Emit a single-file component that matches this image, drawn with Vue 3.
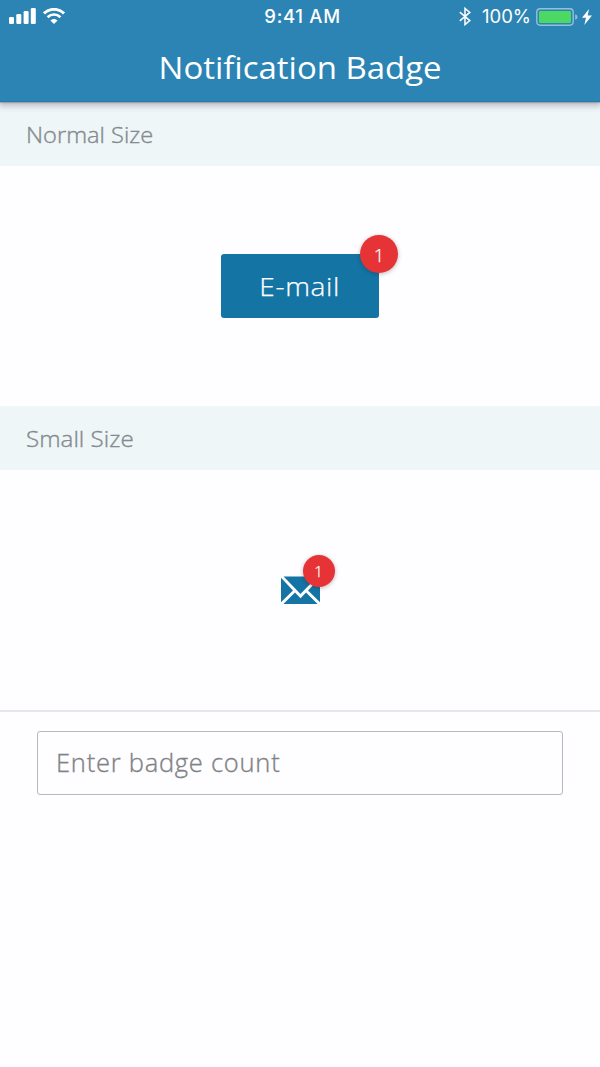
<script setup>
import { ref } from 'vue'

const count = ref(1)
const entry = ref('')
</script>

<template>
  <div class="screen">
    <header class="top">
      <div class="status">
        <div class="left">
          <svg class="signal" width="27" height="16" viewBox="0 0 27 16" fill="#fff">
            <rect x="0" y="9" width="5" height="7" rx="1.3" />
            <rect x="7.3" y="6" width="5" height="10" rx="1.3" />
            <rect x="14.6" y="3" width="5" height="13" rx="1.3" />
            <rect x="21.8" y="0" width="5" height="16" rx="1.3" />
          </svg>
          <svg class="wifi" width="22" height="16" viewBox="0 0 22 16">
            <path d="M1 5.4C6.6 -.1 15.4 -.1 21 5.4" fill="none" stroke="#fff" stroke-width="2.9" />
            <path d="M4.6 9.2C8.2 5.6 13.8 5.6 17.4 9.2" fill="none" stroke="#fff" stroke-width="2.7" />
            <path d="M7.4 12.5C9.4 10.4 12.6 10.4 14.6 12.5L11 16Z" fill="#fff" />
          </svg>
        </div>
        <span class="time">9:41 AM</span>
        <div class="right">
          <svg class="bluetooth" width="12" height="19" viewBox="0 0 12 19" fill="none" stroke="#fff" stroke-width="1.5">
            <path d="M.8 5.1L10.8 13.6L6 17.6V1.4L10.8 5.4L.8 13.9" />
          </svg>
          <span class="percent">100%</span>
          <svg class="battery" width="42" height="18" viewBox="0 0 42 18">
            <rect x=".8" y=".8" width="36.4" height="16.4" rx="3.4" fill="none" stroke="#93c0dc" stroke-width="1.4" />
            <rect x="3" y="3" width="32" height="12" rx="1" fill="#4bd863" />
            <path d="M39.2 6.2C42.2 7 42.2 11 39.2 11.8Z" fill="#93c0dc" />
          </svg>
          <svg class="bolt" width="10" height="16" viewBox="0 0 10 16">
            <path d="M7 0L0 8.8H4L2.3 16L10 6.6H5.7Z" fill="#fff" />
          </svg>
        </div>
      </div>
      <h1 class="title"><span>Notification Badge</span></h1>
    </header>

    <h2 class="section"><span class="normal">Normal Size</span></h2>
    <div class="stage">
      <div class="anchor">
        <button class="button"><span>E-mail</span></button>
        <span class="badge">{{ count }}</span>
      </div>
    </div>

    <h2 class="section"><span>Small Size</span></h2>
    <div class="stage small">
      <div class="anchor mail">
        <svg width="39" height="28" viewBox="0 0 39 28" fill="#1474a4">
          <path d="M2.6 .6H36.4L19.5 18Z" />
          <path d="M0 1.8L12 14.4L0 26.2Z" />
          <path d="M39 1.8L27 14.4L39 26.2Z" />
          <path d="M14 16.5L19.5 22.3L25 16.5L36.6 28H2.4Z" />
        </svg>
        <span class="badge tiny">{{ count }}</span>
      </div>
    </div>

    <div class="form">
      <input v-model="entry" class="field" placeholder="Enter badge count" />
    </div>
  </div>
</template>

<style>
body {
  background: #fefdff;
}
</style>

<style scoped>
.screen {
  height: 1067px;
  overflow: hidden;
  background: #fefdff;
  font-family: "Open Sans", "Noto Sans", sans-serif;
  font-weight: 400;
}
.top {
  position: relative;
  height: 102px;
  box-sizing: border-box;
  background: #2c84b4;
  border-bottom: 1px solid #2479a8;
  box-shadow: 0 1px 1px rgba(70, 80, 95, .3), 0 3px 6px 1px rgba(65, 60, 85, .3);
  color: #fff;
}
.status {
  display: grid;
  grid-template-columns: 1fr auto 1fr;
  height: 32px;
  font-family: Inter, sans-serif;
  font-size: 18.5px;
  line-height: 33px;
}
.left {
  display: flex;
  padding: 8px 0 0 9px;
  gap: 7px;
}
.time {
  padding-left: 5px;
  font-weight: 500;
  letter-spacing: .7px;
}
.right {
  display: flex;
  justify-content: flex-end;
  align-items: center;
  padding-right: 8px;
}
.percent {
  margin: 0 5px 0 11px;
  font-size: 18.5px;
}
.bolt {
  margin-left: 4px;
}
.title {
  margin: 0;
  font-size: 31px;
  font-weight: 400;
  line-height: 70px;
  text-align: center;
}
.title span {
  display: inline-block;
  transform: scaleX(1.063);
}
.section {
  margin: 0;
  height: 64px;
  box-sizing: border-box;
  padding-left: 26px;
  background: #eef6f8;
  color: #858a8f;
  font-size: 22px;
  font-weight: 300;
  line-height: 64px;
  -webkit-text-stroke: .35px #858a8f;
}
.section span {
  display: inline-block;
  transform: scaleX(1.1);
  transform-origin: 0 50%;
}
.section .normal {
  transform: scaleX(1.075);
}
.stage {
  display: flex;
  align-items: center;
  justify-content: center;
  height: 240px;
}
.stage.small {
  border-bottom: 2px solid #e5e6e9;
}
.anchor {
  position: relative;
}
.button {
  display: block;
  width: 158px;
  height: 64px;
  padding: 0;
  border: 0;
  border-radius: 3px;
  background: #1474a4;
  color: #fff;
  font: 300 25.5px/64px "Open Sans", sans-serif;
  -webkit-text-stroke: .25px #fff;
}
.button span {
  display: inline-block;
  letter-spacing: .6px;
  transform: scaleX(1.1);
}
.badge {
  position: absolute;
  top: -19px;
  right: -19px;
  width: 38px;
  height: 38px;
  border-radius: 50%;
  background: #e63336;
  box-shadow: 0 1px 4px rgba(40, 20, 30, .3);
  color: #fff;
  font-size: 18.5px;
  font-weight: 300;
  line-height: 39px;
  text-align: center;
  -webkit-text-stroke: .25px #fff;
}
.mail {
  height: 28px;
}
.mail svg {
  display: block;
}
.badge.tiny {
  top: -21px;
  right: -15px;
  width: 32px;
  height: 32px;
  font-size: 15px;
  line-height: 32px;
}
.form {
  padding: 19px 37px 0;
}
.field {
  display: block;
  width: 100%;
  height: 64px;
  box-sizing: border-box;
  padding: 0 18px 2px;
  border: 1.5px solid #b8b9bc;
  border-radius: 3px;
  outline: 0;
  background: #fefdff;
  color: #808285;
  font: 300 25.5px "Open Sans", sans-serif;
  letter-spacing: .75px;
  -webkit-text-stroke: .35px #808285;
}
.field::placeholder {
  color: #808285;
  opacity: 1;
}
</style>
